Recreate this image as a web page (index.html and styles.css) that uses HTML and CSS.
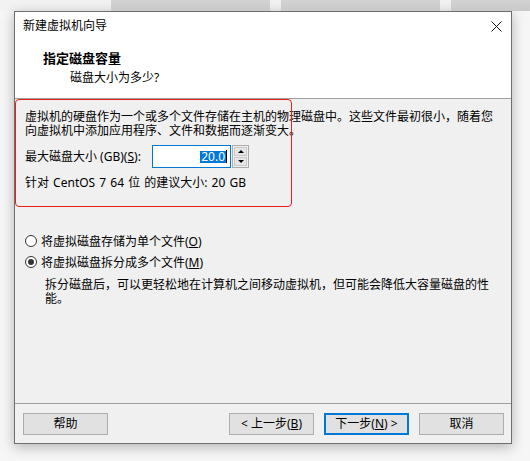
FILE: index.html
```html
<!DOCTYPE html>
<html lang="zh-CN">
<head>
<meta charset="utf-8">
<link rel="stylesheet" href="styles.css">
</head>
<body>
<div class="desk">
  <div class="tiles">
    <div class="tile"></div>
    <div class="tile"></div>
    <div class="tile tile-last"></div>
  </div>
  <div class="window">
    <div class="titlebar">
      <span class="title">新建虚拟机向导</span>
      <svg class="close" width="11" height="11" viewBox="0 0 11 11"><path d="M0.5 0.5 L10.5 10.5 M10.5 0.5 L0.5 10.5" stroke="#111" stroke-width="1" fill="none"/></svg>
    </div>
    <div class="header">
      <div class="h-title">指定磁盘容量</div>
      <div class="h-sub">磁盘大小为多少?</div>
    </div>
    <div class="body">
      <div class="sec">
        <div class="annot"></div>
        <p class="para">虚拟机的硬盘作为一个或多个文件存储在主机的物理磁盘中。这些文件最初很小，随着您<br>向虚拟机中添加应用程序、文件和数据而逐渐变大。</p>
        <div class="sizerow">
          <span class="label">最大磁盘大小 (GB)(<u>S</u>):</span>
          <div class="input"><span class="sel">20.0</span><span class="caret"></span></div>
          <div class="spin">
            <div class="spin-btn"><span class="tri-up"></span></div>
            <div class="spin-btn"><span class="tri-down"></span></div>
          </div>
        </div>
        <div class="rec">针对 CentOS 7 64 位 的建议大小: 20 GB</div>
      </div>
      <div class="radios">
        <div class="radio-row"><span class="radio"></span><span>将虚拟磁盘存储为单个文件(<u>O</u>)</span></div>
        <div class="radio-row"><span class="radio checked"></span><span>将虚拟磁盘拆分成多个文件(<u>M</u>)</span></div>
        <p class="desc">拆分磁盘后，可以更轻松地在计算机之间移动虚拟机，但可能会降低大容量磁盘的性<br>能。</p>
      </div>
    </div>
    <div class="footer">
      <div class="btn">帮助</div>
      <div class="btn-group">
        <div class="btn">&lt; 上一步(<u>B</u>)</div>
        <div class="btn default">下一步(<u>N</u>) &gt;</div>
        <div class="btn">取消</div>
      </div>
    </div>
  </div>
</div>
</body>
</html>
```

FILE: styles.css
```css
* { box-sizing: border-box; }
html, body { margin: 0; padding: 0; }
body {
  width: 530px;
  height: 461px;
  overflow: hidden;
  background: #f6f6f6;
  font-family: "Noto Sans", "Noto Sans CJK SC", sans-serif;
  font-size: 12px;
  color: #000;
}
.desk { width: 530px; height: 461px; }
.tiles {
  height: 11px;
  display: flex;
  gap: 11px;
  padding-left: 111px;
  background: #f2f2f2;
}
.tile {
  width: 159px;
  height: 11px;
  background: linear-gradient(#d3d3d3, #c9c9c9);
}
.tile-last { flex: 1; }
.window {
  margin-left: 14px;
  width: 498px;
  height: 433px;
  border: 1px solid #6e6e6e;
  background: #f0f0f0;
  display: flex;
  flex-direction: column;
  box-shadow: 0 3px 12px rgba(0,0,0,0.28);
}
.titlebar {
  height: 28px;
  background: #fff;
  display: flex;
  align-items: center;
  justify-content: space-between;
  padding: 0 9px 0 8px;
}
.title { line-height: 28px; }
.close { display: block; }
.header {
  height: 59px;
  background: #fff;
  border-bottom: 1px solid #a0a0a0;
  padding-top: 10px;
}
.h-title {
  font-weight: bold;
  font-size: 13px;
  line-height: 16px;
  padding-left: 28px;
}
.h-sub {
  line-height: 16px;
  margin-top: 4px;
  padding-left: 55px;
}
.body {
  flex: 1;
  display: flex;
  flex-direction: column;
}
.sec {
  position: relative;
  height: 108px;
  padding: 12px 0 0 10px;
}
.annot {
  position: absolute;
  left: 0;
  top: 0;
  width: 277px;
  height: 108px;
  border: 1.2px solid #e8201c;
  border-radius: 4px;
  pointer-events: none;
}
.para {
  margin: 0;
  font-family: "Liberation Sans", "Noto Sans CJK SC", sans-serif;
  line-height: 13.5px;
  white-space: nowrap;
}
.sizerow {
  margin-top: 7px;
  height: 23px;
  display: flex;
  align-items: center;
}
.label { width: 127px; line-height: 14px; padding-top: 1px; }
.input {
  width: 79px;
  height: 23px;
  border: 1px solid #0078d7;
  background: #fff;
  display: flex;
  align-items: center;
  justify-content: flex-end;
  padding-right: 3px;
}
.sel {
  background: #0078d7;
  color: #fff;
  line-height: 12px;
  height: 12px;
  padding: 0 1px;
}
.caret {
  width: 1px;
  height: 13px;
  background: #000;
}
.spin {
  margin-left: 1px;
  width: 17px;
  height: 23px;
  border: 1px solid #acacac;
  background: #f0f0f0;
  display: flex;
  flex-direction: column;
  padding: 1px;
  gap: 1px;
}
.spin-btn {
  flex: 1;
  background: #e6e6e6;
  border: 1px solid #c8c8c8;
  display: flex;
  align-items: center;
  justify-content: center;
}
.tri-up, .tri-down {
  width: 0;
  height: 0;
  border-left: 3px solid transparent;
  border-right: 3px solid transparent;
}
.tri-up { border-bottom: 3px solid #000; }
.tri-down { border-top: 3px solid #000; }
.rec {
  margin-top: 8px;
  line-height: 14px;
  word-spacing: 1px;
}
.radios {
  margin-top: 23px;
}
.radio-row {
  height: 21px;
  display: flex;
  align-items: center;
  padding-left: 10px;
}
.radio {
  width: 12px;
  height: 12px;
  border: 1px solid #333;
  border-radius: 50%;
  background: #fff;
  margin-right: 4px;
  display: flex;
  align-items: center;
  justify-content: center;
}
.radio.checked::after {
  content: "";
  width: 6px;
  height: 6px;
  border-radius: 50%;
  background: #333;
}
.desc {
  margin: 6px 0 0 0;
  padding-left: 30px;
  font-family: "Liberation Sans", "Noto Sans CJK SC", sans-serif;
  line-height: 14px;
  white-space: nowrap;
}
.footer {
  border-top: 1px solid #a0a0a0;
  padding: 9px 7px 8px 8px;
  display: flex;
  justify-content: space-between;
}
.btn-group {
  display: flex;
  gap: 10px;
}
.btn {
  width: 85px;
  height: 22px;
  background: #e1e1e1;
  border: 1px solid #adadad;
  display: flex;
  align-items: center;
  justify-content: center;
  line-height: 14px;
}
.btn.default { border: 2px solid #0078d7; }
```
